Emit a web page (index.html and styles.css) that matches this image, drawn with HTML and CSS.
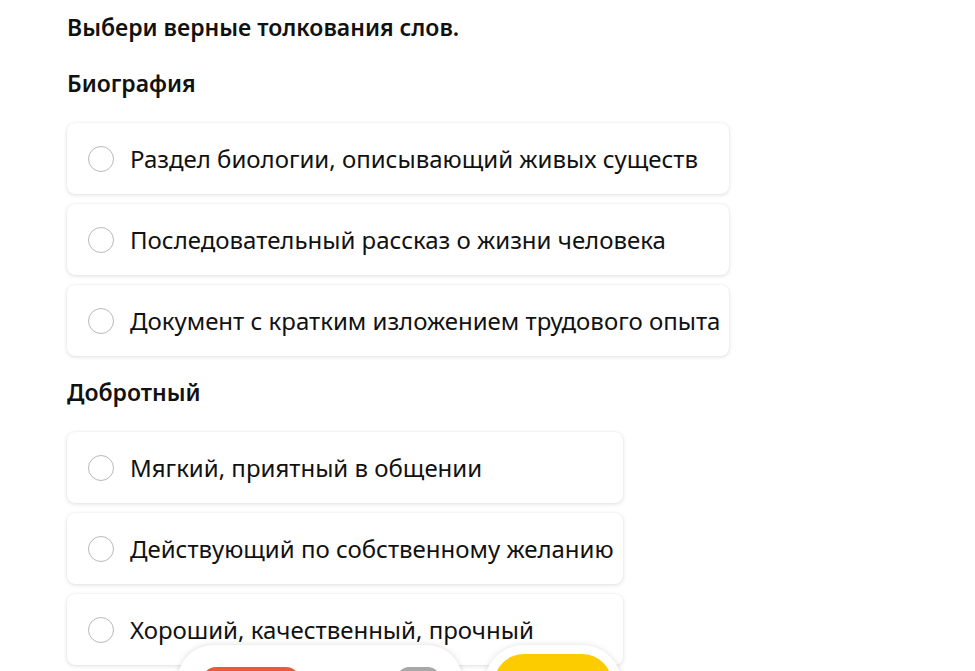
FILE: index.html
```html
<!DOCTYPE html>
<html lang="ru">
<head>
<meta charset="utf-8">
<link rel="stylesheet" href="styles.css">
</head>
<body>
<main class="page">
  <h1 class="title">Выбери верные толкования слов.</h1>

  <section class="group">
    <h2 class="word">Биография</h2>
    <div class="options">
      <label class="option"><span class="radio"></span><span class="text">Раздел биологии, описывающий живых существ</span></label>
      <label class="option"><span class="radio"></span><span class="text">Последовательный рассказ о жизни человека</span></label>
      <label class="option"><span class="radio"></span><span class="text">Документ с кратким изложением трудового опыта</span></label>
    </div>
  </section>

  <section class="group">
    <h2 class="word">Добротный</h2>
    <div class="options">
      <label class="option"><span class="radio"></span><span class="text">Мягкий, приятный в общении</span></label>
      <label class="option"><span class="radio"></span><span class="text">Действующий по собственному желанию</span></label>
      <label class="option"><span class="radio"></span><span class="text">Хороший, качественный, прочный</span></label>
    </div>
  </section>
</main>

<div class="dock">
  <div class="dock-pill">
    <span class="dock-red"></span>
    <span class="dock-gray"></span>
  </div>
  <div class="dock-circle">
    <span class="dock-yellow"></span>
  </div>
</div>
</body>
</html>
```
FILE: styles.css
```css
html, body {
  margin: 0;
  padding: 0;
  background: #ffffff;
  overflow: hidden;
}
body {
  font-family: "Noto Sans", "Open Sans", sans-serif;
  color: #111111;
  width: 975px;
  height: 671px;
  position: relative;
}
.page {
  padding: 10px 0 0 67px;
}
.title {
  margin: 0;
  font-size: 23px;
  font-weight: 600;
  line-height: 34px;
}
.group {
  margin-top: 22px;
}
.group + .group {
  margin-top: 19px;
}
.word {
  margin: 0;
  font-size: 23px;
  font-weight: 600;
  line-height: 34px;
}
.options {
  display: grid;
  width: max-content;
  row-gap: 10px;
  margin-top: 23px;
}
.option {
  display: flex;
  align-items: center;
  height: 71px;
  box-sizing: border-box;
  padding: 0 9px 0 21px;
  background: #ffffff;
  border-radius: 8px;
  box-shadow: 0 1px 4px rgba(0, 0, 0, 0.13), 0 0 1px rgba(0, 0, 0, 0.08);
}
.radio {
  width: 26px;
  height: 26px;
  box-sizing: border-box;
  border: 1.5px solid #b9b9b9;
  border-radius: 50%;
  flex: none;
  margin-right: 16px;
}
.text {
  font-size: 24px;
  line-height: 30px;
  white-space: nowrap;
}
.dock {
  position: absolute;
  left: 178px;
  top: 645px;
  display: flex;
  align-items: flex-start;
  gap: 22px;
}
.dock-pill {
  width: 284px;
  height: 70px;
  background: #ffffff;
  border-radius: 35px;
  box-shadow: 0 0 6px rgba(0, 0, 0, 0.14);
  position: relative;
}
.dock-red {
  position: absolute;
  left: 24px;
  top: 22px;
  width: 98px;
  height: 40px;
  border-radius: 14px;
  background: #ea5b3e;
}
.dock-gray {
  position: absolute;
  left: 219px;
  top: 22px;
  width: 43px;
  height: 30px;
  border-radius: 12px;
  background: #a8a8a8;
}
.dock-circle {
  width: 138px;
  height: 80px;
  background: #ffffff;
  border-radius: 40px;
  box-shadow: 0 0 6px rgba(0, 0, 0, 0.12);
  position: relative;
}
.dock-yellow {
  position: absolute;
  left: 10px;
  top: 9px;
  width: 118px;
  height: 60px;
  border-radius: 30px;
  background: #fccb00;
}
```
